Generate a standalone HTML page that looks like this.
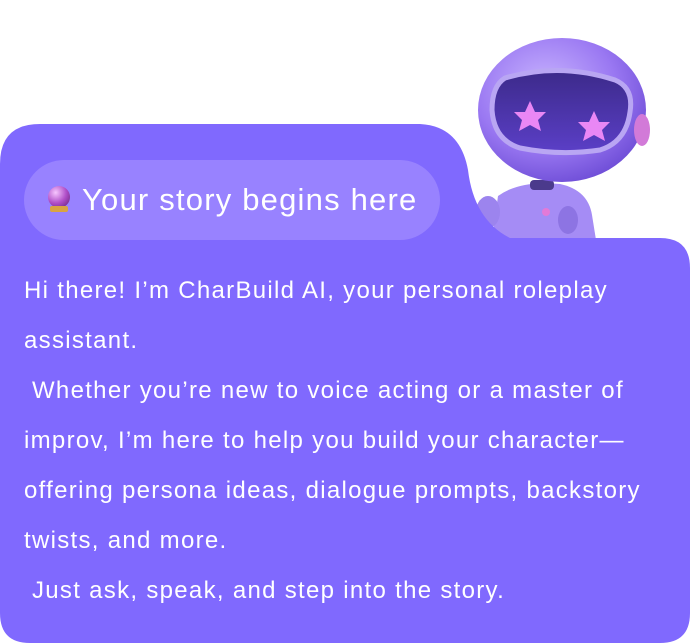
<!DOCTYPE html>
<html><head><meta charset="utf-8"><style>
html,body{margin:0;padding:0;background:#fff;width:690px;height:643px;overflow:hidden;position:relative}
svg{position:absolute;left:0;top:0}
.pill{position:absolute;left:24px;top:160px;width:416px;height:80px;border-radius:40px;background:#9882ff;color:#fff;font-family:"Liberation Sans",sans-serif;font-size:31px;letter-spacing:1.2px;line-height:80px;white-space:nowrap}
.pill .t{position:absolute;left:58px;top:0}
.orb{position:absolute;left:24px;top:26px;width:22px;height:22px;border-radius:50%;background:radial-gradient(circle at 35% 30%,#f7c6ff,#b04fc8 50%,#5a1b70)}
.base{position:absolute;left:26px;top:46px;width:18px;height:6px;border-radius:2px;background:#d9a441}
.txt{position:absolute;left:24px;top:266px;width:660px;color:#fff;font-family:"Liberation Sans",sans-serif;font-size:24px;letter-spacing:1.3px;line-height:50px;white-space:nowrap}
</style></head><body>
<svg width="690" height="643" viewBox="0 0 690 643">
<defs>
<radialGradient id="h" cx="0.4" cy="0.35" r="0.7"><stop offset="0" stop-color="#c9b5ff"/><stop offset="0.6" stop-color="#9a78f2"/><stop offset="1" stop-color="#6d4cd6"/></radialGradient>
<linearGradient id="v" x1="0" y1="0" x2="0" y2="1"><stop offset="0" stop-color="#3c2a8a"/><stop offset="1" stop-color="#5b3fc7"/></linearGradient>
</defs>
<path d="M498 196 Q520 180 560 184 Q588 190 592 215 L596 240 L492 240 Z" fill="#a58cf5"/>
<ellipse cx="488" cy="212" rx="12" ry="16" fill="#9c84ee"/>
<ellipse cx="568" cy="220" rx="10" ry="14" fill="#8d74e3"/>
<circle cx="546" cy="212" r="4" fill="#e37ad8"/>
<rect x="530" y="180" width="24" height="10" rx="4" fill="#4b3a8c"/>
<ellipse cx="562" cy="110" rx="84" ry="72" fill="url(#h)"/>
<ellipse cx="642" cy="130" rx="8" ry="16" fill="#d27ad8"/>
<path d="M505 78 Q560 62 615 80 Q634 88 630 112 Q626 142 600 150 Q560 156 520 148 Q494 140 492 110 Q492 86 505 78 Z" fill="url(#v)" stroke="#b9a6f3" stroke-width="5"/>
<path d="M530 101 L535 112 L546 112 L538 120 L541 131 L530 125 L519 131 L522 120 L514 112 L525 112 Z" fill="#e987f5"/>
<path d="M594 111 L599 122 L610 122 L602 130 L605 141 L594 135 L583 141 L586 130 L578 122 L589 122 Z" fill="#e987f5"/>
<path d="M0 164 Q0 124 40 124 L420 124 Q460 126 468 170 Q474 220 510 238 L660 238 Q690 238 690 268 L690 613 Q690 643 660 643 L30 643 Q0 643 0 613 Z" fill="#8069fe"/>
</svg>
<div class="pill"><div class="orb"></div><div class="base"></div><span class="t">Your story begins here</span></div>
<div class="txt">Hi there! I’m CharBuild AI, your personal roleplay<br>assistant.<br>&nbsp;Whether you’re new to voice acting or a master of<br>improv, I’m here to help you build your character—<br>offering persona ideas, dialogue prompts, backstory<br>twists, and more.<br>&nbsp;Just ask, speak, and step into the story.</div>
</body></html>
